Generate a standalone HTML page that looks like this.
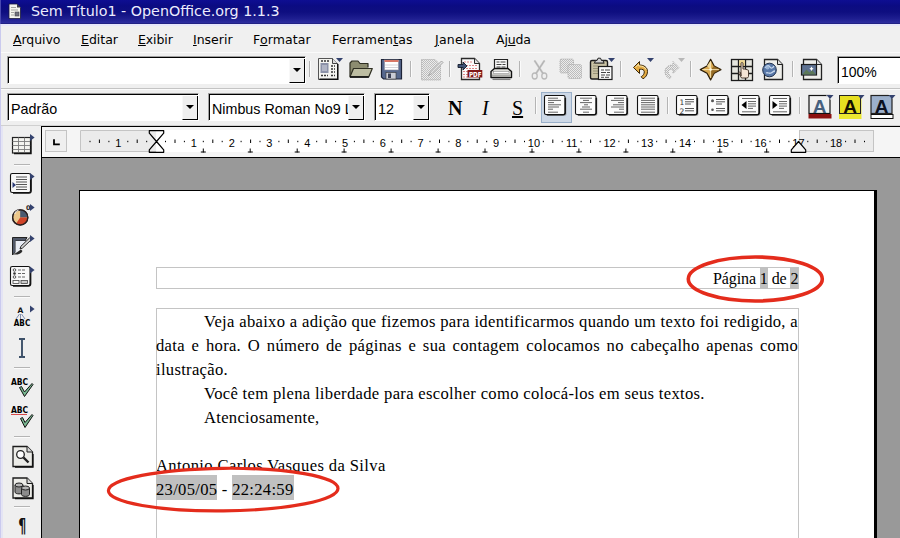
<!DOCTYPE html>
<html lang="pt-BR">
<head>
<meta charset="utf-8">
<title>Sem Título1 - OpenOffice.org 1.1.3</title>
<style>
html,body{margin:0;padding:0;}
body{width:900px;height:538px;overflow:hidden;position:relative;background:#efefef;font-family:"DejaVu Sans","Liberation Sans",sans-serif;color:#000;}
.abs{position:absolute;}
#title{left:0;top:0;width:900px;height:24px;background:linear-gradient(#0e0e92 0%,#0b0b82 25%,#0e0e80 50%,#1c1c8e 75%,#2c2c9e 94%,#1c1c78 100%);}
#title span{position:absolute;left:31px;top:3px;font-size:14.3px;color:#ececff;white-space:nowrap;}
#menu{left:0;top:24px;width:900px;height:28px;background:#f0f0f0;border-bottom:1px solid #a8a8a8;box-shadow:inset 0 2px 0 #e8e8fb;}
#menu span{position:absolute;top:8px;font-size:12.5px;white-space:nowrap;}
#tb1{left:0;top:52px;width:900px;height:37px;background:#efefef;border-top:1px solid #fafafa;border-bottom:1px solid #c4c4c4;box-sizing:border-box;}
#tb2{left:0;top:89px;width:900px;height:37px;background:#efefef;border-top:1px solid #fafafa;border-bottom:1px solid #d0d0d0;box-sizing:border-box;}
.combo{position:absolute;background:#fff;border:1px solid #a0a0a0;border-right-color:#fff;border-bottom-color:#fff;box-shadow:inset 1px 1px 0 #000;box-sizing:border-box;}
.combo .t{position:absolute;left:3px;font-size:14.3px;white-space:nowrap;font-family:"Liberation Sans","DejaVu Sans",sans-serif;}
.combo .btn{position:absolute;right:0;top:2px;bottom:0;width:16px;background:#efefef;border-right:1px solid #000;border-bottom:1px solid #000;border-left:1px solid #f8f8f8;box-sizing:border-box;}
.combo .btn:after{content:"";position:absolute;left:3px;top:9px;border:4px solid transparent;border-top:4px solid #000;border-bottom:0;}
#left{left:0;top:126px;width:41px;height:412px;background:#efefef;border-left:3px solid #e4e4f4;box-sizing:border-box;}
#ruler{left:41px;top:126px;width:859px;height:31px;background:#f5f5f5;border-top:1px solid #000;border-left:1px solid #000;box-sizing:border-box;}
#work{left:41px;top:157px;width:859px;height:381px;background:#999;border-left:1px solid #000;border-top:1px solid #000;box-sizing:border-box;}
#page{left:79px;top:190px;width:798px;height:348px;background:#fff;border-left:1px solid #000;border-top:1px solid #000;border-right:3px solid #000;box-sizing:border-box;}
.frame{position:absolute;border:1px solid #c4c4c4;box-sizing:border-box;}
.doc{position:absolute;font-family:"Liberation Serif","DejaVu Serif",serif;font-size:16.6px;line-height:24px;white-space:nowrap;color:#000;letter-spacing:.3px;}
.j{text-align:justify;text-align-last:justify;white-space:normal;}
.hl{background:#c0c0c0;padding-top:5px;padding-bottom:1px;}
.hh{background:#c0c0c0;padding-top:3px;padding-bottom:2px;}
.fmt{position:absolute;font-family:"Liberation Serif","DejaVu Serif",serif;font-size:20px;line-height:20px;color:#000;}
</style>
</head>
<body>
<div id="title" class="abs"><span>Sem Título1 - OpenOffice.org 1.1.3</span></div>
<div id="menu" class="abs">
<span style="left:13px;letter-spacing:-.08px"><u>A</u>rquivo</span>
<span style="left:81px"><u>E</u>ditar</span>
<span style="left:138px;letter-spacing:-.1px"><u>E</u>xibir</span>
<span style="left:193px"><u>I</u>nserir</span>
<span style="left:253px;letter-spacing:.13px">F<u>o</u>rmatar</span>
<span style="left:332px;letter-spacing:.18px">Ferramen<u>t</u>as</span>
<span style="left:435px;letter-spacing:.25px"><u>J</u>anela</span>
<span style="left:496px;letter-spacing:-.15px">Aj<u>u</u>da</span>
</div>
<div id="tb1" class="abs">
<div class="combo" style="left:7px;top:3px;width:299px;height:28px;"><div class="btn"></div></div>
<div class="combo" style="left:837px;top:3px;width:70px;height:28px;"><span class="t" style="top:7px;font-size:14px">100%</span></div>
</div>
<div id="tb2" class="abs">
<div class="combo" style="left:7px;top:3px;width:192px;height:28px;"><span class="t" style="top:6.5px">Padrão</span><div class="btn"></div></div>
<div class="combo" style="left:208px;top:3px;width:157px;height:28px;overflow:hidden"><span class="t" style="top:6.5px">Nimbus Roman No9 L</span><div class="btn"></div></div>
<div class="combo" style="left:374px;top:3px;width:56px;height:28px;"><span class="t" style="top:6.5px">12</span><div class="btn"></div></div>
<div class="fmt" style="left:448px;top:8px;font-weight:bold;">N</div>
<div class="fmt" style="left:482px;top:8px;font-style:italic;">I</div>
<div class="fmt" style="left:512px;top:8px;text-decoration:underline;">S</div>
</div>
<div id="left" class="abs"></div>
<div class="abs" style="left:0;top:24px;width:1px;height:514px;background:#cacaee;"></div>
<div class="abs" style="left:0;top:0;width:1px;height:24px;background:#4848b0;"></div>
<div id="ruler" class="abs"></div>
<div id="work" class="abs"></div>
<div id="page" class="abs"></div>
<div class="doc" style="left:156px;top:454px;letter-spacing:.37px;">Antonio Carlos Vasques da Silva</div>
<svg class="abs" style="left:100px;top:460px" width="250" height="60" viewBox="100 460 250 60"><ellipse cx="223.2" cy="489.6" rx="114.8" ry="21.3" fill="#fff"/></svg>
<div class="frame" style="left:156px;top:267px;width:643px;height:22px;"></div>
<div class="frame" style="left:156px;top:308px;width:643px;height:240px;"></div>
<div class="doc" style="left:713px;top:268px;line-height:22px;font-size:16px;letter-spacing:-.1px;">Página <span class="hh">1</span> de <span class="hh">2</span></div>
<div class="doc j" style="left:204px;top:310px;width:594px;">Veja abaixo a adição que fizemos para identificarmos quando um texto foi redigido, a</div>
<div class="doc j" style="left:156px;top:334px;width:642px;">data e hora. O número de páginas e sua contagem colocamos no cabeçalho apenas como</div>
<div class="doc" style="left:156px;top:358px;">ilustração.</div>
<div class="doc" style="left:204px;top:382px;letter-spacing:.32px;">Você tem plena liberdade para escolher como colocá-los em seus textos.</div>
<div class="doc" style="left:204px;top:406px;">Atenciosamente,</div>
<div class="doc" style="left:156px;top:478px;"><span class="hl">23/05/05</span> - <span class="hl">22:24:59</span></div>
<svg class="abs" style="left:0;top:0" width="900" height="538" viewBox="0 0 900 538">
<defs><pattern id="dz" width="2" height="2" patternUnits="userSpaceOnUse"><rect width="2" height="2" fill="#ececec"/><rect width="1" height="1" fill="#bcbcbc"/><rect x="1" y="1" width="1" height="1" fill="#bcbcbc"/></pattern></defs>
<g><path d="M9 4h8l3.5 3.5v11h-11.5z" fill="#f4f4ee" stroke="#1a1a3a" stroke-width=".8"/><path d="M17 4v3.5h3.5z" fill="#3a3a4a"/><path d="M11 7.5h5M11 10h7M11 12.5h3M11 15h3" stroke="#a4a4a0" stroke-width="1"/><rect x="15" y="12" width="4" height="4" fill="#70707c" stroke="#44444c" stroke-width=".6"/></g>
<path d="M309.5 61V77" stroke="#b4b4b4" stroke-width="1"/><path d="M310.5 61V77" stroke="#fbfbfb" stroke-width="1"/>
<g><path d="M318.5 58.5h14l5 5v16h-19z" fill="#f4f4f0" stroke="#555" stroke-width="1"/><path d="M332.5 58.5v5h5" fill="#ddd" stroke="#444" stroke-width="1"/><path d="M337.8 64v15.3H319.5" fill="none" stroke="#111" stroke-width="1.5"/><rect x="320.5" y="63" width="8" height="10" fill="#8c92a8"/><rect x="322" y="65" width="5" height="6" fill="#b0b4c4"/><path d="M321 61h8M331 66h4M331 69h4M331 72h4M321 75.5h7M331 75.5h4" stroke="#333" stroke-width="1.3" stroke-dasharray="2 1"/></g>
<path d="M336 58h7l-3.5 4z" fill="#34426e"/>
<g stroke="#2e2e22" stroke-width="1.2" stroke-linejoin="round"><path d="M350 76.5V63l2-2h6l2 2.5h8v4" fill="#8c8c70"/><path d="M350 76.8l3.5-8.3h18.8l-3.5 8.3z" fill="#bdbda2"/><path d="M350 77h18.8" stroke="#111" stroke-width="1.6"/></g>
<g><path d="M381.5 59.5h20v19.5h-18l-2-2z" fill="#56688e" stroke="#1e2438" stroke-width="1.2"/><rect x="384.5" y="60" width="14" height="10" fill="#fff" stroke="#889" stroke-width=".6"/><rect x="384.5" y="60" width="14" height="2" fill="#d87868"/><path d="M385 65h13M385 67.5h13" stroke="#c8c8d0" stroke-width=".8"/><rect x="386" y="72.5" width="10" height="6.5" fill="#c9ccd6" stroke="#333" stroke-width=".6"/><rect x="388" y="73.5" width="3" height="4.5" fill="#3a3f55"/></g>
<path d="M410.5 61V77" stroke="#b4b4b4" stroke-width="1"/><path d="M411.5 61V77" stroke="#fbfbfb" stroke-width="1"/>
<g><path d="M421.5 59.5h13.5l5.5 5.5v15h-19z" fill="url(#dz)" stroke="#a8a8a8" stroke-width="1" stroke-dasharray="1 1"/><path d="M441.5 61l-11 11-2 3.5 3.5-2 11-11z" fill="#e4e4e4" stroke="#a4a4a4" stroke-width="1"/><path d="M424.5 65h6M424.5 68h5M424.5 71h3" stroke="#d8d8d8" stroke-width="1"/></g>
<path d="M449.5 61V77" stroke="#b4b4b4" stroke-width="1"/><path d="M450.5 61V77" stroke="#fbfbfb" stroke-width="1"/>
<g><path d="M461.5 58.5h13l5 5v16h-18z" fill="#fbfbfb" stroke="#2a2a2a" stroke-width="1.3"/><path d="M474.5 58.5v5h5" fill="#ddd" stroke="#2a2a2a" stroke-width="1"/><path d="M464 62h8M466 65.5h11M466 68.5h11M463 71.5h6M463 74.5h6M463 77h6" stroke="#d88" stroke-width="1.2" stroke-dasharray="2 1"/><path d="M458 64.5h5v-2.5l4 4-4 4v-2.5h-5z" fill="#405274" stroke="#141c2c" stroke-width=".9"/><rect x="467.5" y="70" width="14.8" height="7.5" fill="#801818"/><text x="475.2" y="77" font-family="'DejaVu Sans','Liberation Sans',sans-serif" font-weight="bold" font-size="7" fill="#fff" text-anchor="middle" textLength="12.5" lengthAdjust="spacingAndGlyphs">PDF</text></g>
<g><path d="M494.5 59.5h13v11h-13z" fill="#fafafa" stroke="#222" stroke-width="1.2"/><path d="M496.5 62h3M500.5 62h5M496.5 64.5h5M502.5 64.5h3M496.5 67h4M501.5 67h4" stroke="#444" stroke-width="1.100"/><path d="M491 77.5v-6l3.5-3h13.5l3.5 3v6z" fill="#e2e2de" stroke="#111" stroke-width="1.4" stroke-linejoin="round"/><rect x="493.5" y="71.3" width="15.5" height="2.4" fill="#fff" stroke="#777" stroke-width=".5"/><rect x="492" y="74.5" width="19" height="2.4" fill="#aaaaa6"/><path d="M492.5 79.3h18" stroke="#808080" stroke-width="1.5"/></g>
<path d="M519.5 61V77" stroke="#b4b4b4" stroke-width="1"/><path d="M520.5 61V77" stroke="#fbfbfb" stroke-width="1"/>
<g fill="none" stroke="#b9b9b9" stroke-width="1.3"><path d="M534.5 60.5l8.5 13M544.5 60.5l-8.5 13" stroke-width="2.2" stroke="#c6c6c6"/><path d="M534.5 60.5l8.5 13M544.5 60.5l-8.5 13" stroke="#a9a9a9" stroke-width=".7"/><ellipse cx="534.7" cy="76" rx="2.5" ry="3" /><ellipse cx="544.3" cy="76" rx="2.5" ry="3"/></g>
<g stroke="#a8a8a8" stroke-width="1" stroke-dasharray="1 1"><rect x="560" y="59" width="13.5" height="14" rx="1.5" fill="url(#dz)"/><rect x="568" y="64.5" width="13.5" height="14" rx="1.5" fill="url(#dz)"/></g>
<g><rect x="590.5" y="60.5" width="17" height="18.5" rx="1.5" fill="#c9c2a4" stroke="#1c1c1c" stroke-width="1.4"/><path d="M593 63.5h12M593 66h5M593 68.5h5M593 71h5M593 73.5h5" stroke="#8c866c" stroke-width=".8"/><path d="M594.5 63l1-2.5h1.5l1-2.3h2.5l1 2.3h1.5l1 2.5z" fill="#d0d0d0" stroke="#222" stroke-width="1" stroke-linejoin="round"/><rect x="598.5" y="66.5" width="13.5" height="13" fill="#fafafa" stroke="#1c1c1c" stroke-width="1.2"/><path d="M601 70h3M605 70h5M601 72.5h5M607 72.5h3M601 75h4M606 75h4M601 77.3h3M605 77.3h4" stroke="#444" stroke-width="1"/></g>
<path d="M608 58h7l-3.5 4z" fill="#34426e"/>
<path d="M620.5 61V77" stroke="#b4b4b4" stroke-width="1"/><path d="M621.5 61V77" stroke="#fbfbfb" stroke-width="1"/>
<g><path d="M633.5 67.5L639.5 61.5V65C644 65 647.5 67.5 647.5 71.5C647.5 75 645.5 77.5 643 78.8L641.2 76.8C643.2 75.6 644.3 73.8 644.3 71.8C644.3 69.8 642.5 69 639.5 69.2V73.5Z" fill="#e4ac44" stroke="#3a2608" stroke-width="1" stroke-linejoin="round"/><path d="M635.5 67.3l3.2-3.2v1.8c3.5 0 6.5 1.2 7.5 3.8" fill="none" stroke="#f8e4a8" stroke-width="1"/></g>
<path d="M647 58h7l-3.5 4z" fill="#34426e"/>
<g><path d="M679.0 67.5 L673.0 61.5 V65.0 C668.5 65.0 665.0 67.5 665.0 71.5 C665.0 75.0 667.0 77.5 669.5 78.8 L671.3 76.8 C669.3 75.6 668.2 73.8 668.2 71.8 C668.2 69.8 670.0 69.0 673.0 69.2 V73.5 Z" fill="url(#dz)" stroke="#a8a8a8" stroke-width="1" stroke-dasharray="1 1" stroke-linejoin="round"/></g>
<path d="M678 58h7l-3.5 4z" fill="#b8b8b8"/>
<path d="M690.5 61V77" stroke="#b4b4b4" stroke-width="1"/><path d="M691.5 61V77" stroke="#fbfbfb" stroke-width="1"/>
<g><path d="M710.6 59.3L714.2 66.0L720.9 69.6L714.2 73.2L710.6 79.9L707.0 73.2L700.3 69.6L707.0 66.0Z" fill="#d8a850" stroke="#2a1c08" stroke-width="1.2" stroke-linejoin="round"/><path d="M710.6 69.6L714.2 66.0L720.9 69.6L714.2 73.2L710.6 79.9Z" fill="#7c5414" opacity=".7"/><path d="M710.6 69.6L707.0 66.0L710.6 60.8Z" fill="#f4deA0" opacity=".9"/><path d="M710.6 61.3V77.9M702.3 69.6H718.9" stroke="#f8e8b8" stroke-width=".9"/><circle cx="710.6" cy="69.6" r="1.3" fill="#fff8e0"/></g>
<g><rect x="731.5" y="59.5" width="21" height="21" fill="#e6e6de" stroke="#1c1c1c" stroke-width="1.3"/><path d="M738.5 59.5v21M745.5 59.5v21M731.5 66.5h21M731.5 73.5h21" stroke="#1c1c1c" stroke-width="1.3"/><rect x="739.2" y="60.2" width="5.6" height="5.6" fill="#f0d890"/><path d="M741 76v-12.5c0-1.3 2-1.3 2 0v5.5l1.3 0 1.4.3 1.4.4 1.4.6v6.2l-1 1.5h-6l-2.5-4.5c-.7-1.3.8-2 1.5-1z" fill="#f4e4d4" stroke="#3a2a20" stroke-width=".9" stroke-linejoin="round"/></g>
<g><path d="M764.5 59.5h13l5 5v15h-18z" fill="#eeeeea" stroke="#222" stroke-width="1.3"/><path d="M777.5 59.5v5h5" fill="#ddd" stroke="#222" stroke-width="1"/><circle cx="769.5" cy="70" r="6.8" fill="#5878a8" stroke="#20304c" stroke-width="1"/><path d="M765 68c2-3 4-3 5-1s3 1 4-1M766 73c2-1 3 1 5 0s2-2 4-2" fill="none" stroke="#c8d8ec" stroke-width="1.3"/><circle cx="767.5" cy="67.5" r="2" fill="#a8c0e0" opacity=".8"/></g>
<path d="M792.5 61V77" stroke="#b4b4b4" stroke-width="1"/><path d="M793.5 61V77" stroke="#fbfbfb" stroke-width="1"/>
<g><path d="M803.5 59.5h13l5 5v15h-18z" fill="#eeeeea" stroke="#222" stroke-width="1.3"/><path d="M816.5 59.5v5h5" fill="#ddd" stroke="#222" stroke-width="1"/><rect x="801.5" y="64.5" width="15" height="10.5" fill="#5e7292" stroke="#1c1c1c" stroke-width="1.2"/><path d="M802.2 74.4l4.3-5 3 3 2.5-2.5 4 4.5z" fill="#5c7858"/><path d="M811.5 66.5l.8 1.4 1.4.8-1.4.8-.8 1.4-.8-1.4-1.4-.8 1.4-.8z" fill="#fff"/></g>
<path d="M535.5 97V114" stroke="#b4b4b4" stroke-width="1"/><path d="M536.5 97V114" stroke="#fbfbfb" stroke-width="1"/>
<rect x="541.5" y="92.5" width="30" height="30" fill="#cdd8e6" stroke="#98aec8" stroke-width="1"/>
<rect x="545.5" y="96.5" width="21" height="19.5" rx="2.5" fill="#777" opacity=".45"/>
<rect x="544.5" y="95.5" width="20.5" height="19" rx="1.6" fill="#fbfbfb" stroke="#111" stroke-width="1.100"/>
<path d="M565.3 98v14.5q0 2.3-2.3 2.3H547" fill="none" stroke="#111" stroke-width="1.3"/>
<path d="M548 98.2H558M548 100.4H561M548 102.6H554M548 104.8H561M548 107H559M548 109.2H553M548 112.2H558" stroke="#555" stroke-width="0.9"/>
<rect x="576.5" y="96.5" width="21" height="19.5" rx="2.5" fill="#777" opacity=".45"/>
<rect x="575.5" y="95.5" width="20.5" height="19" rx="1.6" fill="#fbfbfb" stroke="#111" stroke-width="1.100"/>
<path d="M596.3 98v14.5q0 2.3-2.3 2.3H578" fill="none" stroke="#111" stroke-width="1.3"/>
<path d="M580 98.2H592M583 100.4H589M580 102.6H592M584 104.8H588M582 107H590M580 109.2H592M583 112.2H589" stroke="#555" stroke-width="0.9"/>
<rect x="607.5" y="96.5" width="21" height="19.5" rx="2.5" fill="#777" opacity=".45"/>
<rect x="606.5" y="95.5" width="20.5" height="19" rx="1.6" fill="#fbfbfb" stroke="#111" stroke-width="1.100"/>
<path d="M627.3 98v14.5q0 2.3-2.3 2.3H609" fill="none" stroke="#111" stroke-width="1.3"/>
<path d="M614 98.2H624M611 100.4H624M618 102.6H624M613 104.8H624M611 107H624M619 109.2H624M614 112.2H624" stroke="#555" stroke-width="0.9"/>
<rect x="638.5" y="96.5" width="21" height="19.5" rx="2.5" fill="#777" opacity=".45"/>
<rect x="637.5" y="95.5" width="20.5" height="19" rx="1.6" fill="#fbfbfb" stroke="#111" stroke-width="1.100"/>
<path d="M658.3 98v14.5q0 2.3-2.3 2.3H640" fill="none" stroke="#111" stroke-width="1.3"/>
<path d="M641 98.2H655M641 100.4H655M641 102.6H655M641 104.8H655M641 107H655M641 109.2H655M641 112.2H655" stroke="#555" stroke-width="0.9"/>
<path d="M667.5 97V114" stroke="#b4b4b4" stroke-width="1"/><path d="M668.5 97V114" stroke="#fbfbfb" stroke-width="1"/>
<rect x="677.5" y="96.5" width="21" height="19.5" rx="2.5" fill="#777" opacity=".45"/>
<rect x="676.5" y="95.5" width="20.5" height="19" rx="1.6" fill="#fbfbfb" stroke="#111" stroke-width="1.100"/>
<path d="M697.3 98v14.5q0 2.3-2.3 2.3H679" fill="none" stroke="#111" stroke-width="1.3"/>
<path d="M685 99.5H694M685 101.8H694M685 104H691M685 108.5H694M685 110.8H694" stroke="#444" stroke-width="0.9"/><text x="679.5" y="104.5" font-family="'DejaVu Sans','Liberation Sans',sans-serif" font-size="7.5" fill="#333">1</text><text x="679.5" y="113.5" font-family="'DejaVu Sans','Liberation Sans',sans-serif" font-size="7.5" fill="#333">2</text>
<rect x="708.5" y="96.5" width="21" height="19.5" rx="2.5" fill="#777" opacity=".45"/>
<rect x="707.5" y="95.5" width="20.5" height="19" rx="1.6" fill="#fbfbfb" stroke="#111" stroke-width="1.100"/>
<path d="M728.3 98v14.5q0 2.3-2.3 2.3H710" fill="none" stroke="#111" stroke-width="1.3"/>
<path d="M716 99.5H725M716 101.8H725M716 104H722M716 108.5H725M716 110.8H725" stroke="#444" stroke-width="0.9"/><circle cx="712.5" cy="100.7" r="1.5" fill="#555"/><circle cx="712.5" cy="109.7" r="1.3" fill="#555"/>
<rect x="739.5" y="96.5" width="21" height="19.5" rx="2.5" fill="#777" opacity=".45"/>
<rect x="738.5" y="95.5" width="20.5" height="19" rx="1.6" fill="#fbfbfb" stroke="#111" stroke-width="1.100"/>
<path d="M759.3 98v14.5q0 2.3-2.3 2.3H741" fill="none" stroke="#111" stroke-width="1.3"/>
<path d="M742 98.5H756M748 101.5H756M748 103.8H756M748 106.1H756M748 108.4H753M742 111.8H756" stroke="#555" stroke-width="0.9"/><path d="M746.5 101v8l-5-4z" fill="#000"/>
<rect x="770.5" y="96.5" width="21" height="19.5" rx="2.5" fill="#777" opacity=".45"/>
<rect x="769.5" y="95.5" width="20.5" height="19" rx="1.6" fill="#fbfbfb" stroke="#111" stroke-width="1.100"/>
<path d="M790.3 98v14.5q0 2.3-2.3 2.3H772" fill="none" stroke="#111" stroke-width="1.3"/>
<path d="M773 98.5H787M779 101.5H787M779 103.8H787M779 106.1H787M779 108.4H784M773 111.8H787" stroke="#555" stroke-width="0.9"/><path d="M772.5 101v8l5-4z" fill="#000"/>
<path d="M799.5 97V114" stroke="#b4b4b4" stroke-width="1"/><path d="M800.5 97V114" stroke="#fbfbfb" stroke-width="1"/>
<rect x="809" y="95.5" width="21" height="18" fill="#f0f0f0" stroke="#111" stroke-width="1.2"/><rect x="808.5" y="114" width="23" height="4.5" fill="#8c1010"/><text x="819.5" y="112.8" font-family="'Liberation Sans','DejaVu Sans',sans-serif" font-weight="bold" font-size="19" fill="#46607e" text-anchor="middle">A</text>
<path d="M826 95h8v5h-3z" fill="#efefef"/>
<path d="M826.5 95h7l-3.5 4z" fill="#34426e"/>
<rect x="839" y="95" width="22.5" height="24" fill="#ece830"/><rect x="839.5" y="95.5" width="21" height="18" fill="#e6de20" stroke="#222" stroke-width="1"/><text x="850" y="112.8" font-family="'Liberation Sans','DejaVu Sans',sans-serif" font-weight="bold" font-size="19" fill="#141000" text-anchor="middle">A</text>
<path d="M857 94h8v5h-3z" fill="#efefef"/>
<path d="M857.5 95h7l-3.5 4z" fill="#34426e"/>
<rect x="871" y="95.5" width="21" height="18" fill="#9cb0cc" stroke="#222" stroke-width="1.2"/><rect x="871" y="114.5" width="22" height="4" fill="#fff" stroke="#111" stroke-width="1"/><text x="881.5" y="112.8" font-family="'Liberation Sans','DejaVu Sans',sans-serif" font-weight="bold" font-size="19" fill="#0c1020" text-anchor="middle">A</text>
<path d="M888 94h8v5h-3z" fill="#efefef"/>
<path d="M888.5 95h7l-3.5 4z" fill="#34426e"/>
<g><rect x="12.5" y="137.5" width="18" height="15.5" fill="#f4f4f0" stroke="#222" stroke-width="1.2"/><path d="M12.5 141.5h18M12.5 145.5h18M12.5 149.5h18M18.5 137.5v15.5M24.5 137.5v15.5" stroke="#7c7c7c" stroke-width=".9"/><path d="M31 139v14.5H14" fill="none" stroke="#111" stroke-width="1.4"/></g>
<path d="M30 134v7l4.6 -3.5z" fill="#34426e"/>
<path d="M14 164.5H30" stroke="#b4b4b4" stroke-width="1"/><path d="M14 165.5H30" stroke="#fbfbfb" stroke-width="1"/>
<g><rect x="10.5" y="173.5" width="20" height="19" rx="1.8" fill="#f8f8f8" stroke="#111" stroke-width="1.100"/><path d="M31.2 176v14.7q0 2.3-2.3 2.3H13" fill="none" stroke="#111" stroke-width="1.3"/><path d="M16 177h11M16 179.5h11M16 182h11M16 184.5h11M16 187h11M16 189.5h11" stroke="#555" stroke-width="1"/><path d="M12.5 182v6l3.5-3z" fill="#2c3c78"/></g>
<path d="M30 173v7l4.6 -3.5z" fill="#34426e"/>
<g><circle cx="20.2" cy="217.4" r="7.6" fill="#ecc88c" stroke="#2a2020" stroke-width="1.2"/><path d="M20.2 217.4V209.8A7.6 7.6 0 0 1 27.8 217.4z" fill="#4a5a70"/><path d="M20.2 217.4H27.8A7.6 7.6 0 0 1 16 223.7z" fill="#d04428"/><circle cx="20.2" cy="217.4" r="7.6" fill="none" stroke="#2a2020" stroke-width="1.3"/><path d="M14.5 214a6.5 6.5 0 0 1 4-4" stroke="#fff" stroke-width="1.2" fill="none" opacity=".8"/></g>
<text x="26" y="210" font-family="'DejaVu Sans','Liberation Sans',sans-serif" font-size="6.5" font-weight="bold" fill="#222">0</text>
<path d="M30 204v7l4.6 -3.5z" fill="#34426e"/>
<g><path d="M12.5 237.5h14.5l-2 3.5h-9.5v11l-3 3z" fill="#505868" stroke="#222" stroke-width="1"/><path d="M15.5 241h10l-9 12h-1z" fill="#e8ecf4"/><path d="M31.5 239.5l-9 8.5-2.5 1 .8-2.6 8.7-8.4z" fill="#d8d8d8" stroke="#222" stroke-width="1"/><path d="M21 249.5c-2 1-4 3-7.5 5 4 .5 7.5-.5 9-3.5z" fill="#2a2a2a"/></g>
<path d="M30 235v7l4.6 -3.5z" fill="#34426e"/>
<g><rect x="10.5" y="266.5" width="19.5" height="19" rx="1.8" fill="#f8f8f8" stroke="#111" stroke-width="1.100"/><path d="M30.7 269v14.7q0 2.3-2.3 2.3H13" fill="none" stroke="#111" stroke-width="1.3"/><circle cx="14.5" cy="270" r="1.3" fill="none" stroke="#333" stroke-width=".8"/><circle cx="14.5" cy="273.5" r="1.3" fill="#333"/><circle cx="14.5" cy="277" r="1.3" fill="none" stroke="#333" stroke-width=".8"/><path d="M18 270h8M18 273.5h8M18 277h8" stroke="#666" stroke-width="1" stroke-dasharray="3 1"/><rect x="13" y="280.5" width="6" height="3" fill="none" stroke="#444" stroke-width=".8"/><rect x="21" y="280.5" width="6.5" height="3" fill="#ccc" stroke="#444" stroke-width=".8"/></g>
<path d="M30 266.5v7l4.6 -3.5z" fill="#34426e"/>
<path d="M14 296.5H30" stroke="#b4b4b4" stroke-width="1"/><path d="M14 297.5H30" stroke="#fbfbfb" stroke-width="1"/>
<text x="20.5" y="313" font-family="'DejaVu Sans','Liberation Sans',sans-serif" font-weight="bold" font-size="7.5" fill="#111" text-anchor="middle">A</text><path d="M19.5 314l-3.5 5M20.5 314v5M21.5 314l3.5 5" stroke="#6878a0" stroke-width=".8"/><text x="22" y="326" font-family="'DejaVu Sans','Liberation Sans',sans-serif" font-weight="bold" font-size="8" fill="#000" text-anchor="middle" textLength="16.5" lengthAdjust="spacingAndGlyphs">ABC</text>
<path d="M30 305.5v7l4.6 -3.5z" fill="#34426e"/>
<path d="M19 339h2.2l.8.8.8-.8H25M19 357h2.2l.8-.8.8.8H25M22 339.8v16.4" fill="none" stroke="#3c5068" stroke-width="1.900"/>
<path d="M14 367.5H30" stroke="#b4b4b4" stroke-width="1"/><path d="M14 368.5H30" stroke="#fbfbfb" stroke-width="1"/>
<text x="19.5" y="385" font-family="'DejaVu Sans','Liberation Sans',sans-serif" font-weight="bold" font-size="8" fill="#000" text-anchor="middle" textLength="17.2" lengthAdjust="spacingAndGlyphs">ABC</text><path d="M19.5 387.5l2-1 3 5.5 7.5-8.5 1 1-8.5 12z" fill="#78b890" stroke="#111" stroke-width="1" stroke-linejoin="round"/>
<text x="19.5" y="413" font-family="'DejaVu Sans','Liberation Sans',sans-serif" font-weight="bold" font-size="8" fill="#000" text-anchor="middle" textLength="17.2" lengthAdjust="spacingAndGlyphs">ABC</text><path d="M11 415l1-1 1 1 1-1 1 1 1-1 1 1 1-1 1 1 1-1 1 1 1-1 1 1 1-1 1 1 1-1 1 1" fill="none" stroke="#d02020" stroke-width=".8"/><path d="M20.5 418.5l2-1 2.5 5 7-8 1 1-8 12z" fill="#78b890" stroke="#111" stroke-width="1" stroke-linejoin="round"/>
<path d="M14 436.5H30" stroke="#b4b4b4" stroke-width="1"/><path d="M14 437.5H30" stroke="#fbfbfb" stroke-width="1"/>
<g><path d="M13 446.5h14l5.5 5.5v14.5h-19.5z" fill="#ecece8" stroke="#1c1c1c" stroke-width="1.3"/><path d="M27 446.5v5.5h5.5" fill="#d8d8d8" stroke="#1c1c1c" stroke-width="1"/><path d="M33 454v13H15" fill="none" stroke="#111" stroke-width="1.3"/><circle cx="20.5" cy="454.5" r="3.8" fill="#fff" stroke="#222" stroke-width="1.3"/><path d="M23.5 457.5l5 5" stroke="#222" stroke-width="2.4"/></g>
<g><path d="M13 478h14l5.5 5.5v14.5h-19.5z" fill="#ecece8" stroke="#1c1c1c" stroke-width="1.3"/><path d="M27 478v5.5h5.5" fill="#d8d8d8" stroke="#1c1c1c" stroke-width="1"/><path d="M33 485v13.5H15" fill="none" stroke="#111" stroke-width="1.3"/><path d="M15 485v7c0 2.5 8 2.5 8 0v-7" fill="#8c8c8c" stroke="#222" stroke-width="1"/><ellipse cx="19" cy="485" rx="4" ry="2" fill="#b4b4b4" stroke="#222" stroke-width="1"/><path d="M21.5 488v6.5c0 2.5 8 2.5 8 0V488" fill="#8c8c8c" stroke="#222" stroke-width="1"/><ellipse cx="25.5" cy="488" rx="4" ry="2" fill="#b4b4b4" stroke="#222" stroke-width="1"/></g>
<path d="M14 506.5H30" stroke="#b4b4b4" stroke-width="1"/><path d="M14 507.5H30" stroke="#fbfbfb" stroke-width="1"/>
<text x="18.3" y="531.5" font-family="'DejaVu Sans','Liberation Sans',sans-serif" font-size="19" font-weight="bold" fill="#111" textLength="8" lengthAdjust="spacingAndGlyphs">¶</text>
<rect x="45.5" y="130.5" width="21" height="21" fill="#efefef" stroke="#c4c4c4"/><path d="M54 139.2v5.2h5.8" fill="none" stroke="#000" stroke-width="1.8"/>
<rect x="80" y="130" width="794" height="22" fill="#fff"/>
<rect x="80.5" y="130.5" width="75.6" height="21" fill="#ebebeb"/><path d="M156.1 130.5H80.5v21H156.1" fill="none" stroke="#c4c4c4"/>
<rect x="799.5" y="130.5" width="74" height="21" fill="#ebebeb" stroke="#c4c4c4"/>
<path d="M90.0 140.8v1.4M99.4 139.5v3.5M108.9 140.8v1.4M127.8 140.8v1.4M137.2 139.5v3.5M146.7 140.8v1.4M165.5 140.8v1.4M175.0 139.5v3.5M184.4 140.8v1.4M203.3 140.8v1.4M212.8 139.5v3.5M222.2 140.8v1.4M241.1 140.8v1.4M250.6 139.5v3.5M260.0 140.8v1.4M278.9 140.8v1.4M288.3 139.5v3.5M297.8 140.8v1.4M316.7 140.8v1.4M326.1 139.5v3.5M335.6 140.8v1.4M354.4 140.8v1.4M363.9 139.5v3.5M373.3 140.8v1.4M392.2 140.8v1.4M401.7 139.5v3.5M411.1 140.8v1.4M430.0 140.8v1.4M439.5 139.5v3.5M448.9 140.8v1.4M467.8 140.8v1.4M477.2 139.5v3.5M486.7 140.8v1.4M505.6 140.8v1.4M515.0 139.5v3.5M524.5 140.8v1.4M543.3 140.8v1.4M552.8 139.5v3.5M562.2 140.8v1.4M581.1 140.8v1.4M590.6 139.5v3.5M600.0 140.8v1.4M618.9 140.8v1.4M628.4 139.5v3.5M637.8 140.8v1.4M656.7 140.8v1.4M666.1 139.5v3.5M675.6 140.8v1.4M694.5 140.8v1.4M703.9 139.5v3.5M713.4 140.8v1.4M732.2 140.8v1.4M741.7 139.5v3.5M751.1 140.8v1.4M770.0 140.8v1.4M779.5 139.5v3.5M788.9 140.8v1.4M807.8 140.8v1.4M817.2 139.5v3.5M826.7 140.8v1.4M845.6 140.8v1.4M855.0 139.5v3.5M864.5 140.8v1.4" stroke="#000" stroke-width="1"/>
<text x="118.3" y="146.5" font-family="'Liberation Sans','DejaVu Sans',sans-serif" font-size="11" fill="#000" text-anchor="middle">1</text>
<text x="193.9" y="146.5" font-family="'Liberation Sans','DejaVu Sans',sans-serif" font-size="11" fill="#000" text-anchor="middle">1</text>
<text x="231.7" y="146.5" font-family="'Liberation Sans','DejaVu Sans',sans-serif" font-size="11" fill="#000" text-anchor="middle">2</text>
<text x="269.4" y="146.5" font-family="'Liberation Sans','DejaVu Sans',sans-serif" font-size="11" fill="#000" text-anchor="middle">3</text>
<text x="307.2" y="146.5" font-family="'Liberation Sans','DejaVu Sans',sans-serif" font-size="11" fill="#000" text-anchor="middle">4</text>
<text x="345.0" y="146.5" font-family="'Liberation Sans','DejaVu Sans',sans-serif" font-size="11" fill="#000" text-anchor="middle">5</text>
<text x="382.8" y="146.5" font-family="'Liberation Sans','DejaVu Sans',sans-serif" font-size="11" fill="#000" text-anchor="middle">6</text>
<text x="420.6" y="146.5" font-family="'Liberation Sans','DejaVu Sans',sans-serif" font-size="11" fill="#000" text-anchor="middle">7</text>
<text x="458.3" y="146.5" font-family="'Liberation Sans','DejaVu Sans',sans-serif" font-size="11" fill="#000" text-anchor="middle">8</text>
<text x="496.1" y="146.5" font-family="'Liberation Sans','DejaVu Sans',sans-serif" font-size="11" fill="#000" text-anchor="middle">9</text>
<text x="533.9" y="146.5" font-family="'Liberation Sans','DejaVu Sans',sans-serif" font-size="11" fill="#000" text-anchor="middle">10</text>
<text x="571.7" y="146.5" font-family="'Liberation Sans','DejaVu Sans',sans-serif" font-size="11" fill="#000" text-anchor="middle">11</text>
<text x="609.5" y="146.5" font-family="'Liberation Sans','DejaVu Sans',sans-serif" font-size="11" fill="#000" text-anchor="middle">12</text>
<text x="647.2" y="146.5" font-family="'Liberation Sans','DejaVu Sans',sans-serif" font-size="11" fill="#000" text-anchor="middle">13</text>
<text x="685.0" y="146.5" font-family="'Liberation Sans','DejaVu Sans',sans-serif" font-size="11" fill="#000" text-anchor="middle">14</text>
<text x="722.8" y="146.5" font-family="'Liberation Sans','DejaVu Sans',sans-serif" font-size="11" fill="#000" text-anchor="middle">15</text>
<text x="760.6" y="146.5" font-family="'Liberation Sans','DejaVu Sans',sans-serif" font-size="11" fill="#000" text-anchor="middle">16</text>
<text x="798.4" y="146.5" font-family="'Liberation Sans','DejaVu Sans',sans-serif" font-size="11" fill="#000" text-anchor="middle">17</text>
<text x="836.1" y="146.5" font-family="'Liberation Sans','DejaVu Sans',sans-serif" font-size="11" fill="#000" text-anchor="middle">18</text>
<path d="M203.3 148.5v4M200.8 152h5M250.2 148.5v4M247.8 152h5M297.2 148.5v4M294.7 152h5M344.1 148.5v4M341.6 152h5M391.1 148.5v4M388.6 152h5M438.1 148.5v4M435.6 152h5M485.0 148.5v4M482.5 152h5M532.0 148.5v4M529.5 152h5M578.9 148.5v4M576.4 152h5M625.9 148.5v4M623.4 152h5M672.8 148.5v4M670.3 152h5M719.8 148.5v4M717.3 152h5M766.7 148.5v4M764.2 152h5" stroke="#000" stroke-width="1"/>
<path d="M149.3 130.7h14.4v2.5l-7.2 8.3-7.2-8.3zM149.3 152.3h14.4v-2.5l-7.2-8.3-7.2 8.3z" fill="none" stroke="#000" stroke-width="1.2" stroke-linejoin="round"/>
<path d="M791.3 152.3h14.4v-2.5l-7.2-8.3-7.2 8.3z" fill="#f4f4f4" stroke="#000" stroke-width="1.2" stroke-linejoin="round"/>
<ellipse cx="755.3" cy="279" rx="67" ry="22" fill="none" stroke="#e42c1c" stroke-width="3.6"/>
<ellipse cx="223.2" cy="489.6" rx="114.8" ry="21.3" fill="none" stroke="#e42c1c" stroke-width="3.2" transform="rotate(-.6 223 489.3)"/>
</svg>
</body>
</html>
